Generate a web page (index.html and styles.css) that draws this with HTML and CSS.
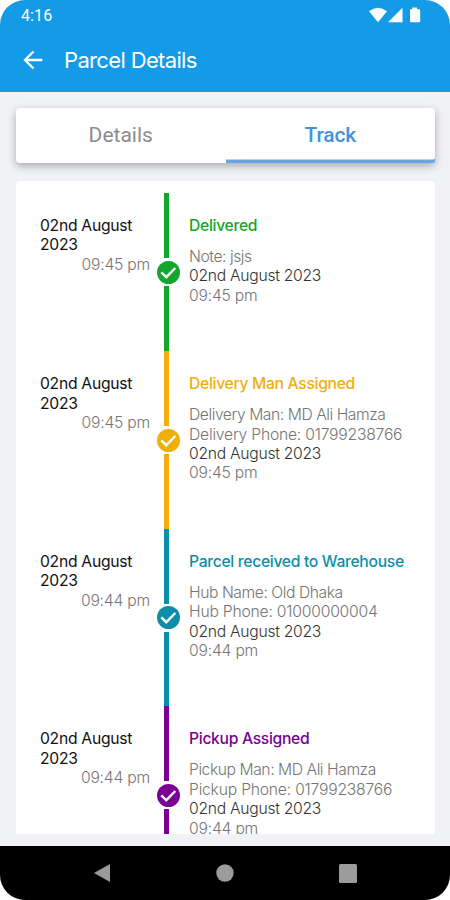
FILE: index.html
```html
<!DOCTYPE html>
<html lang="en">
<head>
<meta charset="utf-8">
<title>Parcel Details</title>
<link rel="stylesheet" href="styles.css">
</head>
<body>
<svg class="defs" width="0" height="0"><symbol id="check" viewBox="0 0 23 23"><circle cx="11.5" cy="11.5" r="11.5" fill="currentColor"/><path d="M4.300 11.3 9.3 16.2 18.3 7" fill="none" stroke="#fff" stroke-width="2.4"/></symbol></svg>
<div class="phone">
  <header class="header">
    <div class="status">
      <span>4:16</span>
      <svg width="52" height="16" viewBox="0 0 52 16" fill="#fff"><path d="M0 4.2Q9 -2.8 18 4.2L9 15.3Z"/><path d="M19 15.3 33.5 0.8V15.3Z"/><path d="M41 2.3h2.2V.6h4.8v1.7h2.2q1 0 1 1v11q0 1-1 1H42q-1 0-1-1v-11q0-1 0-1Z"/></svg>
    </div>
    <div class="appbar">
      <svg width="20" height="20" viewBox="0 0 20 20" fill="none" stroke="#fff" stroke-width="2.3"><path d="M19.3 10H2M10.5 1.5 2 10l8.500 8.500"/></svg>
      <h1>Parcel Details</h1>
    </div>
  </header>
  <main class="content">
    <nav class="tabs"><span class="tab">Details</span><span class="tab active">Track</span></nav>
    <section class="timeline">
      <article class="event green">
        <div class="when"><p class="date">02nd August 2023</p><p class="time">09:45 pm</p></div>
        <div class="rail"><i></i><svg><use href="#check"/></svg><i></i></div>
        <div class="info"><h2>Delivered</h2><p>Note: jsjs</p><p class="dark">02nd August 2023</p><p>09:45 pm</p></div>
      </article>
      <article class="event amber">
        <div class="when"><p class="date">02nd August 2023</p><p class="time">09:45 pm</p></div>
        <div class="rail"><i></i><svg><use href="#check"/></svg><i></i></div>
        <div class="info"><h2>Delivery Man Assigned</h2><p>Delivery Man: MD Ali Hamza</p><p>Delivery Phone: 01799238766</p><p class="dark">02nd August 2023</p><p>09:45 pm</p></div>
      </article>
      <article class="event teal">
        <div class="when"><p class="date">02nd August 2023</p><p class="time">09:44 pm</p></div>
        <div class="rail"><i></i><svg><use href="#check"/></svg><i></i></div>
        <div class="info"><h2>Parcel received to Warehouse</h2><p>Hub Name: Old Dhaka</p><p>Hub Phone: 01000000004</p><p class="dark">02nd August 2023</p><p>09:44 pm</p></div>
      </article>
      <article class="event purple">
        <div class="when"><p class="date">02nd August 2023</p><p class="time">09:44 pm</p></div>
        <div class="rail"><i></i><svg><use href="#check"/></svg><i></i></div>
        <div class="info"><h2>Pickup Assigned</h2><p>Pickup Man: MD Ali Hamza</p><p>Pickup Phone: 01799238766</p><p class="dark">02nd August 2023</p><p>09:44 pm</p></div>
      </article>
    </section>
  </main>
  <footer class="navbar">
    <svg width="18" height="20" viewBox="0 0 18 20"><path d="M17 1v18L1 10Z"/></svg>
    <svg width="18" height="18" viewBox="0 0 18 18"><circle cx="9" cy="9" r="8.700"/></svg>
    <svg width="18" height="19" viewBox="0 0 18 19"><rect width="18" height="19" rx="1.500"/></svg>
  </footer>
</div>
</body>
</html>
```
FILE: styles.css
```css
* { box-sizing: border-box; margin: 0; }
body { background: #fff; font-family: Inter, Roboto, sans-serif; }
.defs { display: block; }
.phone { display: flex; flex-direction: column; width: 450px; height: 900px; border-radius: 25px; overflow: hidden; background: #f0f2f5; }
.header { height: 92px; background: #139be8; color: #fff; }
.status { display: flex; justify-content: space-between; align-items: center; height: 29px; padding: 0 29px 0 21px; font: 400 16px Roboto, sans-serif; letter-spacing: .1px; }
.status span { padding-top: 2px; }
.appbar { display: flex; align-items: center; gap: 21px; height: 62px; padding-left: 23px; }
.appbar h1 { font-size: 22px; font-weight: 400; letter-spacing: -0.65px; }
.content { display: flex; flex-direction: column; gap: 18px; flex: 1; min-height: 0; padding: 16px 15px 12px 16px; }
.tabs { display: flex; flex: none; height: 55px; background: #fff; border-radius: 4px; box-shadow: 0 3px 8px rgba(0, 0, 0, .3); }
.tab { flex: 1; text-align: center; font: 400 21px/55px Roboto, sans-serif; letter-spacing: 0; color: #8c8c8c; }
.tab.active { color: #3f94dc; box-shadow: inset 0 -3.500px #6ba4e4; border-radius: 0 4px 2px 0; font-weight: 500; letter-spacing: -.2px; }
.timeline { flex: 1; min-height: 0; overflow: hidden; padding: 12px 24px 0; background: #fff; border-radius: 4px 4px 0 0; }
.event { display: grid; grid-template-columns: 110px 39px 1fr; font-size: 15.7px; line-height: 19.36px; font-weight: 300; letter-spacing: -.22px; color: #757575; }
.when, .info { padding: 23.1px 0 46.1px; }
.date { color: #111; font-weight: 400; letter-spacing: -.28px; }
.time { text-align: right; }
.rail { display: flex; flex-direction: column; padding-left: 14px; gap: 2.5px; }
.rail i { flex: 1; width: 4.5px; background: currentColor; }
.rail svg { flex: none; width: 23px; height: 23px; margin-left: -7px; }
.info { white-space: nowrap; }
.info h2 { font-size: 15.7px; font-weight: 500; letter-spacing: -.32px; margin-bottom: 11.6px; }
.info h2 + p { letter-spacing: -.45px; }
.info .dark { color: #333; letter-spacing: -.28px; }
.green .rail, .green h2 { color: #11a62c; }
.amber .rail, .amber h2 { color: #f0af0b; }
.teal .rail, .teal h2 { color: #0b8fa8; }
.purple .rail, .purple h2 { color: #790093; }
.navbar { display: flex; justify-content: space-between; align-items: center; height: 54px; padding: 0 93px; background: #000; fill: #9b9b9b; }
```
